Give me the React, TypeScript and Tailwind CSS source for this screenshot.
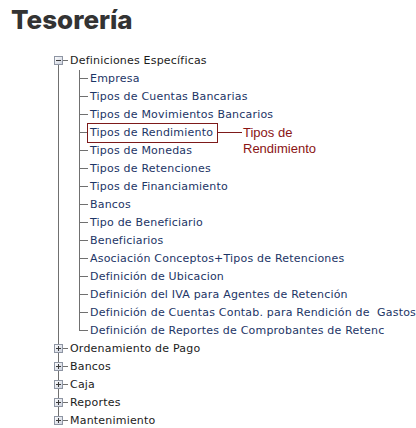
import React from "react";

const LINE = "bg-[#707070]";

function Expander({ open }: { open: boolean }) {
  return (
    <svg width="9" height="9" viewBox="0 0 9 9" className="block shrink-0">
      <defs>
        <linearGradient id={open ? "gm" : "gp"} x1="0" y1="0" x2="1" y2="1">
          <stop offset="0" stopColor="#ffffff" />
          <stop offset="1" stopColor="#c9cfdc" />
        </linearGradient>
      </defs>
      <rect x="0.5" y="0.5" width="8" height="8" fill={`url(#${open ? "gm" : "gp"})`} stroke="#8e95a3" />
      <rect x="2" y="4" width="5" height="1" fill="#3a3a3a" />
      {!open && <rect x="4" y="2" width="1" height="5" fill="#3a3a3a" />}
    </svg>
  );
}

function RootRow({ label, open, first, last }: { label: string; open: boolean; first?: boolean; last?: boolean }) {
  return (
    <div className="flex h-[18px]">
      <div className="ml-[4px] flex w-[9px] flex-col items-center">
        <div className={`h-[4px] w-px ${first ? "" : LINE}`} />
        <Expander open={open} />
        <div className={`h-[5px] w-px ${last ? "" : LINE}`} />
      </div>
      <div className="flex w-[5px] flex-col">
        <div className="h-[9px] border-b border-[#707070]" />
      </div>
      <span className="ml-[2px] whitespace-pre leading-[18px] text-[#1b1b1b]">{label}</span>
    </div>
  );
}

function ChildRow({ label, last }: { label: string; last?: boolean }) {
  return (
    <div className="flex h-[18px]">
      <div className="w-[8px] shrink-0" />
      <div className={`h-full w-px shrink-0 ${LINE}`} />
      <div className="w-[20px] shrink-0" />
      <div className="flex w-[9px] shrink-0 flex-col">
        <div className="h-[9px] border-b border-l border-[#707070]" />
        <div className={`flex-1 ${last ? "" : "border-l border-[#707070]"}`} />
      </div>
      <span className="ml-[2px] whitespace-pre leading-[18px] text-[#1c3566]">{label}</span>
    </div>
  );
}

const children = [
  "Empresa",
  "Tipos de Cuentas Bancarias",
  "Tipos de Movimientos Bancarios",
  "Tipos de Rendimiento",
  "Tipos de Monedas",
  "Tipos de Retenciones",
  "Tipos de Financiamiento",
  "Bancos",
  "Tipo de Beneficiario",
  "Beneficiarios",
  "Asociación Conceptos+Tipos de Retenciones",
  "Definición de Ubicacion",
  "Definición del IVA para Agentes de Retención",
  "Definición de Cuentas Contab. para Rendición de  Gastos",
  "Definición de Reportes de Comprobantes de Retenc",
];

const roots = ["Ordenamiento de Pago", "Bancos", "Caja", "Reportes", "Mantenimiento"];

export default function App() {
  return (
    <div className="relative h-[428px] w-[416px] overflow-hidden bg-white">
      <div className="h-[52px] pl-[11px] pt-[4px]">
        <h1 className="text-[26px] font-extrabold leading-[32px] text-[#333333]" style={{ fontFamily: "Inter, 'Open Sans', sans-serif" }}>
          Tesorería
        </h1>
      </div>
      <div
        className="pl-[50px] text-[11px] tracking-[0.2px]"
        style={{ fontFamily: "'DejaVu Sans', Verdana, sans-serif" }}
      >
        <RootRow label="Definiciones Específicas" open first />
        {children.map((c, i) => (
          <ChildRow key={i} label={c} last={i === children.length - 1} />
        ))}
        {roots.map((r, i) => (
          <RootRow key={r} label={r} open={false} last={i === roots.length - 1} />
        ))}
      </div>

      {/* annotation callout */}
      <div className="absolute left-[87px] top-[123px] h-[20px] w-[131px] border border-[#7d1a1a]" />
      <div className="absolute left-[217px] top-[132px] h-px w-[25px] bg-[#7d1a1a]" />
      <div
        className="absolute left-[243px] top-[125px] text-[13px] leading-[16px] text-[#8a1414]"
        style={{ fontFamily: "'Liberation Sans', Arial, sans-serif" }}
      >
        Tipos de
        <br />
        Rendimiento
      </div>
    </div>
  );
}
